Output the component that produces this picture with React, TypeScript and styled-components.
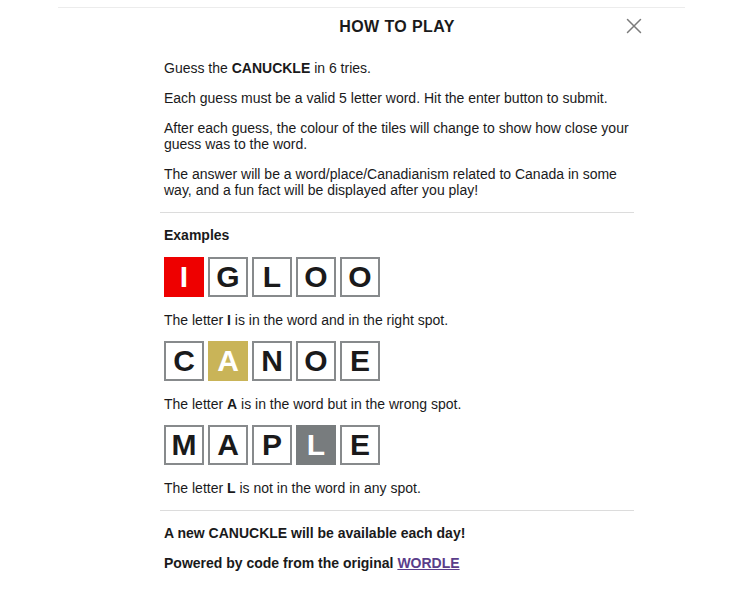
import React from "react";
import styled, { createGlobalStyle } from "styled-components";

const GlobalStyle = createGlobalStyle`
  html, body {
    margin: 0;
    padding: 0;
    background: #ffffff;
  }
  body {
    font-family: "Liberation Sans", Arial, sans-serif;
    color: #1a1a1b;
  }
`;

type TileState = "correct" | "present" | "absent" | "empty";

const tileColors: Record<TileState, { bg: string; border: string; fg: string }> = {
  correct: { bg: "#ee0000", border: "#ee0000", fg: "#ffffff" },
  present: { bg: "#c9b458", border: "#c9b458", fg: "#ffffff" },
  absent: { bg: "#787c7e", border: "#787c7e", fg: "#ffffff" },
  empty: { bg: "#ffffff", border: "#878a8c", fg: "#1a1a1b" },
};

const examples: { word: string; index: number; state: TileState; before: string; after: string }[] = [
  { word: "IGLOO", index: 0, state: "correct", before: "The letter ", after: " is in the word and in the right spot." },
  { word: "CANOE", index: 1, state: "present", before: "The letter ", after: " is in the word but in the wrong spot." },
  { word: "MAPLE", index: 3, state: "absent", before: "The letter ", after: " is not in the word in any spot." },
];

export default function App() {
  return (
    <>
      <GlobalStyle />
      <Modal>
        <Column>
          <Header>
            <span />
            <Title>HOW TO PLAY</Title>
            <Close aria-label="close">
              <svg width="16" height="16" viewBox="0 0 16 16" fill="none" stroke="#7b7b7b" strokeWidth="1.5" strokeLinecap="round">
                <path d="M1.5 1.5 L14.5 14.5 M14.5 1.5 L1.5 14.5" />
              </svg>
            </Close>
          </Header>

          <Section>
            <Para>Guess the <b>CANUCKLE</b> in 6 tries.</Para>
            <Para>Each guess must be a valid 5 letter word. Hit the enter button to submit.</Para>
            <Para>After each guess, the colour of the tiles will change to show how close your guess was to the word.</Para>
            <Para>The answer will be a word/place/Canadianism related to Canada in some way, and a fun fact will be displayed after you play!</Para>
          </Section>

          <Divider />

          <Section>
            <Heading>Examples</Heading>
            {examples.map((ex) => (
              <Example key={ex.word}>
                <TileRow>
                  {ex.word.split("").map((ch, i) => (
                    <Tile key={i} $state={i === ex.index ? ex.state : "empty"}>{ch}</Tile>
                  ))}
                </TileRow>
                <Para>
                  {ex.before}<b>{ex.word[ex.index]}</b>{ex.after}
                </Para>
              </Example>
            ))}
          </Section>

          <Divider />

          <Section>
            <Heading>A new CANUCKLE will be available each day!</Heading>
            <Heading>
              Powered by code from the original <WordleLink href="#">WORDLE</WordleLink>
            </Heading>
          </Section>
        </Column>
      </Modal>
    </>
  );
}

const Modal = styled.div`
  width: 627px;
  margin: 7px 0 0 58px;
  border-top: 1px solid #ececec;
  padding-left: 102px;
  box-sizing: border-box;
`;

const Column = styled.div`
  width: 474px;
`;

const Header = styled.div`
  display: grid;
  grid-template-columns: 1fr auto 1fr;
  align-items: center;
  height: 38px;
`;

const Title = styled.h1`
  margin: 0;
  font-size: 16px;
  font-weight: 700;
  letter-spacing: 0.4px;
  color: #1a1a1b;
`;

const Close = styled.button`
  justify-self: end;
  margin-right: -8px;
  margin-top: -2px;
  background: none;
  border: 0;
  padding: 0;
  display: flex;
  cursor: pointer;
`;

const Section = styled.div`
  padding: 0 4px;
  margin: 14px 0;
`;

const Para = styled.p`
  margin: 0 0 14px;
  font-size: 14px;
  line-height: 16px;
  color: #1a1a1b;

  &:last-child {
    margin-bottom: 0;
  }
`;

const Heading = styled.p`
  margin: 0 0 14px;
  font-size: 14px;
  line-height: 16px;
  font-weight: 700;

  &:last-child {
    margin-bottom: 0;
  }
`;

const Divider = styled.hr`
  margin: 0;
  border: 0;
  border-top: 1px solid #dcdcdc;
`;

const Example = styled.div`
  margin-top: 13px;
`;

const TileRow = styled.div`
  display: flex;
  gap: 4px;
  margin-bottom: 15px;
`;

const Tile = styled.div<{ $state: TileState }>`
  width: 40px;
  height: 40px;
  box-sizing: border-box;
  display: flex;
  align-items: center;
  justify-content: center;
  border: 2px solid ${(p) => tileColors[p.$state].border};
  background: ${(p) => tileColors[p.$state].bg};
  color: ${(p) => tileColors[p.$state].fg};
  font-size: 30px;
  font-weight: 700;
`;

const WordleLink = styled.a`
  color: #5a3d8a;
  text-decoration: underline;
`;
